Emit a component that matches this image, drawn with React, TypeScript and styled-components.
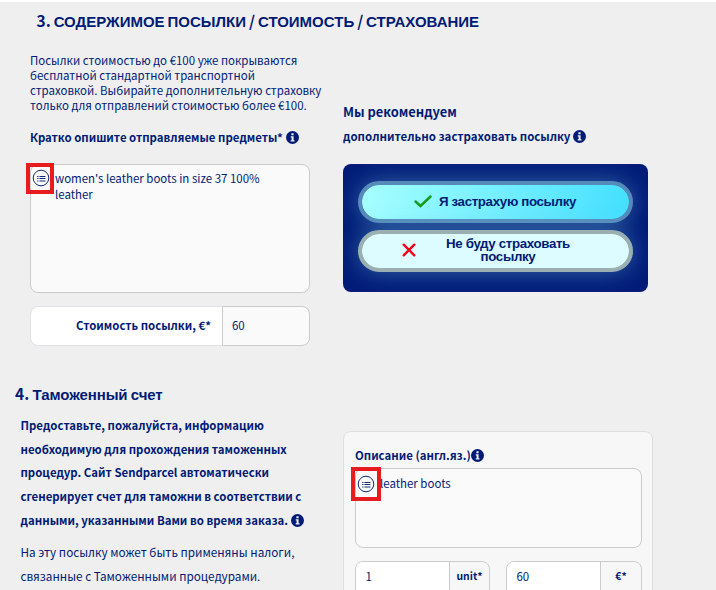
import React from 'react'
import styled, { createGlobalStyle } from 'styled-components'

const InfoIcon = () => (
  <InfoSvg viewBox="0 0 13 13">
    <circle cx="6.5" cy="6.5" r="6.5" fill="#001b75" />
    <path d="M5.4 2.3h2.2v1.9H5.4zM4.7 5.3h2.9v3.9h.9v1.3H4.7V9.2h.9V6.6h-.9z" fill="#efefef" />
  </InfoSvg>
)

const ListIcon = () => (
  <svg width="18" height="18" viewBox="0 0 18 18">
    <circle cx="9" cy="9" r="7.8" fill="none" stroke="#13297d" strokeWidth="1" />
    <path d="M5.2 7.5h1.3M5.2 9.5h1.3M5.2 12h1.3M7.4 7.5h6M7.4 9.5h6M7.4 12h6" stroke="#13297d" strokeWidth="1" />
  </svg>
)

const App = () => {
  return (
    <Page>
      <GlobalStyle />
      <ContentsTitle>
        <Sans>3.</Sans> СОДЕРЖИМОЕ ПОСЫЛКИ <Sans>/</Sans> СТОИМОСТЬ <Sans>/</Sans> СТРАХОВАНИЕ
      </ContentsTitle>
      <ContentsSection>
        <ContentsForm>
          <Line $height={15}>Посылки стоимостью до €100 уже покрываются</Line>
          <Line $height={15}>бесплатной стандартной транспортной</Line>
          <Line $height={15}>страховкой. Выбирайте дополнительную страховку</Line>
          <Line $height={15}>только для отправлений стоимостью более €100.</Line>
          <FieldLabel>
            <Line $height={18} $bold>Кратко опишите отправляемые предметы*</Line>
            <InfoIcon />
          </FieldLabel>
          <TextArea $height={129}>
            <Marker $width={28} $height={31} $shift={1}><ListIcon /></Marker>
            <Line $height={16}>women's leather boots in size 37 100%</Line>
            <Line $height={16}>leather</Line>
          </TextArea>
          <PriceField>
            <PriceLabel><Line $height={18} $bold>Стоимость посылки, €*</Line></PriceLabel>
            <PriceValue><Line $height={18}>60</Line></PriceValue>
          </PriceField>
        </ContentsForm>
        <Insurance>
          <Line $height={18} $size={12.9} $bold>Мы рекомендуем</Line>
          <InsuranceLabel>
            <Line $height={18} $size={11.47} $bold>дополнительно застраховать посылку</Line>
            <InfoIcon />
          </InsuranceLabel>
          <Choices>
            <Choice $accept>
              <svg width="20" height="15" viewBox="0 0 20 15">
                <path d="M2.5 7.5 7.5 12 17.5 2.5" fill="none" stroke="#169b1c" strokeWidth="2.5" strokeLinecap="round" />
              </svg>
              <ChoiceText>Я застрахую посылку</ChoiceText>
            </Choice>
            <Choice>
              <svg width="14" height="14" viewBox="0 0 14 14">
                <path d="M1.7 1.7 12.3 12.3M12.3 1.7 1.7 12.3" stroke="#fa0019" strokeWidth="2.4" strokeLinecap="round" />
              </svg>
              <ChoiceText $wide>Не буду страховать<br />посылку</ChoiceText>
            </Choice>
          </Choices>
        </Insurance>
      </ContentsSection>
      <CustomsTitle><Sans>4.</Sans> Таможенный счет</CustomsTitle>
      <CustomsSection>
        <CustomsText>
          <Line $height={23.7} $bold>Предоставьте, пожалуйста, информацию</Line>
          <Line $height={23.7} $bold>необходимую для прохождения таможенных</Line>
          <Line $height={23.7} $bold>процедур. Сайт Sendparcel автоматически</Line>
          <Line $height={23.7} $bold>сгенерирует счет для таможни в соответствии с</Line>
          <LabelRow>
            <Line $height={23.7} $bold>данными, указанными Вами во время заказа.</Line>
            <InfoIcon />
          </LabelRow>
          <TaxNote>
            <Line $height={23.5} $size={11.75}>На эту посылку может быть применяны налоги,</Line>
            <Line $height={23.5} $size={11.75}>связанные с Таможенными процедурами.</Line>
          </TaxNote>
        </CustomsText>
        <InvoiceCard>
          <LabelRow $tight>
            <Line $height={18} $bold>Описание (англ.яз.)</Line>
            <InfoIcon />
          </LabelRow>
          <InvoiceArea $height={80}>
            <Marker $width={30} $height={34}><ListIcon /></Marker>
            <Line $height={16}>leather boots</Line>
          </InvoiceArea>
          <Amounts>
            <Amount $width={135}>
              <AmountValue><Line $height={18}>1</Line></AmountValue>
              <Unit><Line $height={18} $size={10.4} $bold>unit*</Line></Unit>
            </Amount>
            <Amount $width={136}>
              <AmountValue><Line $height={18}>60</Line></AmountValue>
              <Unit><Line $height={18} $size={10.4} $bold>€*</Line></Unit>
            </Amount>
          </Amounts>
        </InvoiceCard>
      </CustomsSection>
    </Page>
  )
}

const GlobalStyle = createGlobalStyle`
  body {
    margin: 0;
    overflow: hidden;
    background-color: #efefef;
  }
  * {
    box-sizing: border-box;
  }
`;

const Page = styled.div`
  width: 716px;
  height: 590px;
  overflow: hidden;
  border-top: 2px solid white;
  background-color: #efefef;
  color: #001b75;
  font-family: 'Noto Sans CJK SC', 'Noto Sans', sans-serif;
`;

const Sans = styled.span`
  font-family: 'Noto Sans CJK SC', sans-serif;
  font-size: 15.5px;
  font-weight: 700;
  line-height: 0;
  letter-spacing: 0;
`;

const ContentsTitle = styled.h2`
  margin: 0;
  padding: 11px 0 0 36.5px;
  height: 51px;
  font: bold 15px/18px 'Liberation Sans', sans-serif;
  letter-spacing: 0;
  word-spacing: -1.2px;
  white-space: nowrap;
`;

const ContentsSection = styled.section`
  display: grid;
  grid-template-columns: 313px 305px;
  padding-left: 30px;
  height: 330px;
`;

const ContentsForm = styled.div`
  width: 280px;
`;

const Line = styled.div<{ $height: number; $size?: number; $bold?: boolean }>`
  height: ${p => p.$height}px;
  line-height: ${p => p.$height}px;
  font-size: ${p => p.$size || (p.$bold ? 11.42 : 11.47)}px;
  font-weight: ${p => (p.$bold ? 700 : 400)};
  white-space: nowrap;
`;

const InfoSvg = styled.svg`
  flex: none;
  width: 13px;
  height: 13px;
`;

const LabelRow = styled.div<{ $tight?: boolean }>`
  display: flex;
  align-items: center;
  gap: ${p => (p.$tight ? 0 : 3)}px;
`;

const FieldLabel = styled(LabelRow)`
  margin-top: 15px;
`;

const TextArea = styled.div<{ $height: number }>`
  position: relative;
  height: ${p => p.$height}px;
  margin-top: 18px;
  padding: 5px 24px;
  border: 1px solid #cbcbcb;
  border-radius: 8px;
  background-color: #fafafa;
`;

const InvoiceArea = styled(TextArea)`
  margin-top: 4px;
  padding-top: 6px;
`;

/* highlight frame hanging over the corner of a text area */
const Marker = styled.div<{ $width: number; $height: number; $shift?: number }>`
  position: absolute;
  top: -2px;
  left: -5px;
  width: ${p => p.$width}px;
  height: ${p => p.$height}px;
  padding: 0 0 1px ${p => (p.$shift || 0) * 2}px;
  border: 4px solid #e81c1e;
  display: flex;
  align-items: center;
  justify-content: center;

  svg {
    flex: none;
  }
`;

const PriceField = styled.div`
  display: flex;
  height: 40px;
  margin-top: 13px;
`;

const PriceLabel = styled.div`
  width: 192px;
  padding: 0 11px 2px 0;
  display: flex;
  align-items: center;
  justify-content: flex-end;
  border: 1px solid #dfe2ea;
  border-right: none;
  border-radius: 8px 0 0 8px;
  background-color: white;
`;

const PriceValue = styled.div`
  flex: 1;
  padding: 0 0 2px 9px;
  display: flex;
  align-items: center;
  border: 1px solid #cbcbcb;
  border-radius: 0 8px 8px 0;
  background-color: #fafafa;
`;

const Insurance = styled.div`
  padding-top: 50px;
`;

const InsuranceLabel = styled(LabelRow)`
  margin-top: 6px;
`;

const Choices = styled.div`
  height: 128px;
  margin-top: 19px;
  padding: 17px 15px;
  display: flex;
  flex-direction: column;
  gap: 7px;
  border-radius: 8px;
  overflow: hidden;
  background-color: #001b78;
`;

const Choice = styled.div<{ $accept?: boolean }>`
  flex: none;
  height: 42px;
  padding: ${p => (p.$accept ? '0 2px 2px 0' : '0 19px 2px 0')};
  display: flex;
  align-items: center;
  justify-content: center;
  border: 4px solid ${p => (p.$accept ? '#558abb' : '#9aafb2')};
  border-radius: 21px;
  background: ${p => (p.$accept
    ? 'linear-gradient(100deg, #a6ffff, #43dfff) padding-box, #558abb'
    : 'linear-gradient(#dcfcff, #dcfcff) padding-box, #9aafb2')};
  box-shadow: 0 0 24px rgba(110, 190, 220, 0.45);
`;

const ChoiceText = styled.span<{ $wide?: boolean }>`
  margin-left: ${p => (p.$wide ? 30 : 6)}px;
  font: bold 13.3px/13px 'Liberation Sans', sans-serif;
  letter-spacing: -0.35px;
  text-align: center;
  white-space: nowrap;
`;

const CustomsTitle = styled.h2`
  margin: 0;
  padding: 3px 0 0 15px;
  height: 31px;
  font: bold 15px/18px 'Liberation Sans', sans-serif;
  letter-spacing: -0.1px;
  word-spacing: -0.7px;
  white-space: nowrap;
`;

const CustomsSection = styled.section`
  display: grid;
  grid-template-columns: 322.5px 310px;
  padding-left: 20.5px;
`;

const CustomsText = styled.div``;

const TaxNote = styled.div`
  margin-top: 8px;
`;

const InvoiceCard = styled.div`
  height: 190px;
  margin-top: 17px;
  padding: 14px 10px 14px 11px;
  border: 1px solid #dedede;
  border-radius: 8px;
  background-color: #f7f7f7;
`;

const Amounts = styled.div`
  display: flex;
  justify-content: space-between;
  margin-top: 13px;
`;

const Amount = styled.div<{ $width: number }>`
  display: flex;
  width: ${p => p.$width}px;
  height: 40px;
  border: 1px solid #cbcbcb;
  border-radius: 8px;
  overflow: hidden;
`;

const AmountValue = styled.div`
  width: 94px;
  padding: 5px 9.5px;
  border-right: 1px solid #cbcbcb;
  background-color: white;
`;

const Unit = styled.div`
  flex: 1;
  padding-top: 5px;
  text-align: center;
`;

export default App;
